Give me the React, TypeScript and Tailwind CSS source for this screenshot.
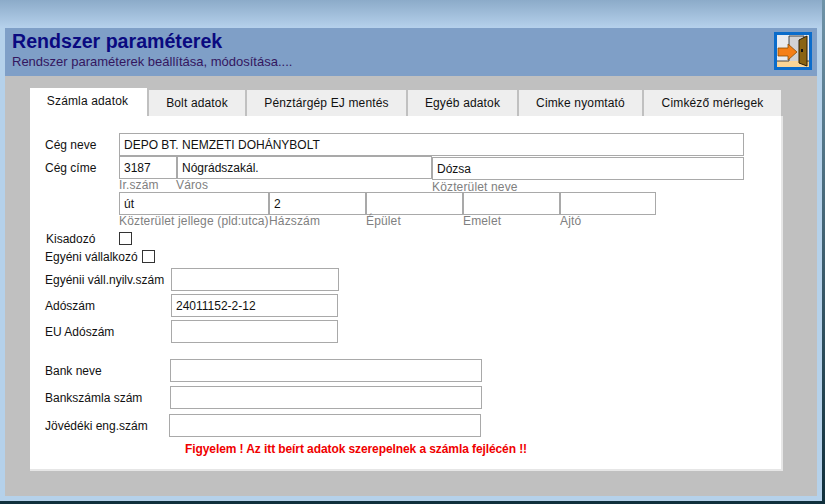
const tabs = [
  { label: 'Számla adatok', w: 'w-[117px]', active: true },
  { label: 'Bolt adatok', w: 'w-[96px]' },
  { label: 'Pénztárgép EJ mentés', w: 'w-[159px]' },
  { label: 'Egyéb adatok', w: 'w-[109px]' },
  { label: 'Cimke nyomtató', w: 'w-[123px]' },
  { label: 'Cimkéző mérlegek', w: 'w-[137px]' },
];

function Box({ value = '', className = '' }: { value?: string; className?: string }) {
  return (
    <input
      readOnly
      value={value}
      className={`block h-[23px] border border-[#a9a9a9] bg-white pl-[4px] text-[12px] text-[#111] outline-none ${className}`}
    />
  );
}

function Hint({ children, className = '' }: { children: string; className?: string }) {
  return <div className={`text-[12px] leading-[13px] tracking-[0.15px] text-[#808080] ${className}`}>{children}</div>;
}

function Check() {
  return <div className="h-[13px] w-[13px] border border-[#333] bg-white" />;
}

function Row({ label, value, w, top, left }: { label: string; value?: string; w: string; top: string; left: string }) {
  return (
    <div className={`flex items-center ${top}`}>
      <span className={`text-[12px] text-[#111] ${left}`}>{label}</span>
      <Box value={value} className={w} />
    </div>
  );
}

function DoorIcon() {
  return (
    <div className="h-[38px] w-[38px] border-[3px] border-[#0b6ccb] bg-[#e6e8ee]">
      <svg width="32" height="32" viewBox="0 0 32 32" className="block">
        <rect x="0" y="0" width="32" height="32" fill="#e9ebf0" />
        <polygon points="0,26 32,26 32,32 0,32" fill="#fbd596" />
        <polyline points="0,26 12,26 12,1 27,1 27,26 32,26" fill="#d2d2d4" stroke="#333" strokeWidth="0.9" />
        <polygon points="22,5 30,1 30,31 22,28" fill="#8a6414" stroke="#2c1e04" strokeWidth="1" />
        <rect x="24" y="14" width="2" height="3" fill="#111" />
        <polygon
          points="1,13 11,13 11,9 20,17 11,25 11,21 1,21"
          fill="#f57f17"
          stroke="#8a4b00"
          strokeWidth="0.8"
        />
      </svg>
    </div>
  );
}

export default function App() {
  return (
    <div className="flex h-[504px] w-[825px] flex-col overflow-hidden bg-[#b5d1ea] font-['Liberation_Sans',Arial,sans-serif]">
      <div className="flex min-h-0 flex-1">
        <div className="flex min-w-0 flex-1 flex-col">
          <div className="h-[28px] shrink-0 bg-gradient-to-b from-[#8cabc9] to-[#b6d1ec]" />
          <div className="ml-[5px] mr-[5px] flex h-[468px] flex-col">
            <header className="flex h-[48px] shrink-0 items-start justify-between bg-[#7f9fc7] pl-[7px] pr-[5px]">
              <div>
                <h1 className="mt-[3px] text-[19.6px] font-bold leading-[21px] text-[#0a0a80]">Rendszer paraméterek</h1>
                <p className="mt-[2px] text-[13px] leading-[15px] text-[#33165f]">Rendszer paraméterek beállítása, módosítása....</p>
              </div>
              <div className="mt-[4px]">
                <DoorIcon />
              </div>
            </header>

            <main className="flex-1 bg-[#c0c0c0] pl-[25px] pt-[12px]">
              <nav className="flex h-[28px] w-[753px] items-end gap-[2px]">
                {tabs.map((t) => (
                  <div
                    key={t.label}
                    className={`flex items-center justify-center text-[12px] tracking-[0.15px] text-[#111] ${t.w} ${
                      t.active ? 'h-[28px] bg-white pb-[3px] pr-[2px]' : 'h-[26px] bg-[#eeeeee]'
                    }`}
                  >
                    {t.label}
                  </div>
                ))}
              </nav>

              <section className="h-[355px] w-[753px] border-b-2 border-r-2 border-[#e6e6e6] bg-white pl-[15px] pt-[17px]">
                <div className="flex items-center">
                  <span className="w-[74px] text-[12px] text-[#111]">Cég neve</span>
                  <Box value="DEPO BT. NEMZETI DOHÁNYBOLT" className="w-[625px]" />
                </div>

                <div className="flex">
                  <span className="mt-[3px] w-[74px] text-[12px] text-[#111]">Cég címe</span>
                  <div className="w-[625px]">
                    <div className="flex">
                      <div>
                        <div className="flex">
                          <Box value="3187" className="w-[58px]" />
                          <Box value="Nógrádszakál." className="w-[255px]" />
                        </div>
                        <div className="flex">
                          <Hint className="w-[57px]">Ir.szám</Hint>
                          <Hint>Város</Hint>
                        </div>
                      </div>
                      <div className="mt-[1px] h-[35px]">
                        <Box value="Dózsa" className="w-[312px]" />
                        <Hint className="mt-[1px]">Közterület neve</Hint>
                      </div>
                    </div>
                    <div className="flex">
                      {[
                        { value: 'út', hint: 'Közterület jellege (pld:utca)', w: 'w-[150px]' },
                        { value: '2', hint: 'Házszám', w: 'w-[97px]' },
                        { value: '', hint: 'Épület', w: 'w-[97px]' },
                        { value: '', hint: 'Emelet', w: 'w-[97px]' },
                        { value: '', hint: 'Ajtó', w: 'w-[96px]' },
                      ].map((f) => (
                        <div key={f.hint} className={f.w}>
                          <Box value={f.value} className="w-full" />
                          <Hint className="whitespace-nowrap">{f.hint}</Hint>
                        </div>
                      ))}
                    </div>
                  </div>
                </div>

                <div className="mt-[4px] flex h-[13px] items-center">
                  <span className="ml-px w-[73px] text-[12px] text-[#111]">Kisadozó</span>
                  <Check />
                </div>
                <div className="mt-[5px] flex h-[13px] items-center">
                  <span className="w-[97px] text-[12px] text-[#111]">Egyéni vállalkozó</span>
                  <Check />
                </div>

                <Row label="Egyénii váll.nyilv.szám" w="w-[168px]" top="mt-[5px]" left="w-[126px]" />
                <Row label="Adószám" value="24011152-2-12" w="w-[167px]" top="mt-[3px]" left="w-[126px]" />
                <Row label="EU Adószám" w="w-[167px]" top="mt-[3px]" left="w-[126px]" />
                <Row label="Bank neve" w="w-[312px]" top="mt-[16px]" left="w-[125px]" />
                <Row label="Bankszámla szám" w="w-[312px]" top="mt-[4px]" left="w-[125px]" />
                <Row label="Jövédéki eng.szám" w="w-[312px]" top="mt-[5px]" left="w-[124px]" />

                <p className="ml-[140px] mt-[5px] text-[12px] font-bold leading-[14px] tracking-[-0.09px] text-[#f00000]">
                  Figyelem ! Az itt beírt adatok szerepelnek a számla fejlécén !!
                </p>
              </section>
            </main>
          </div>
        </div>
        <div className="w-[3px] shrink-0 bg-gradient-to-b from-[#6f93a8] to-[#10303c]" />
      </div>
      <div className="h-[3px] shrink-0 bg-[#10303c]" />
    </div>
  );
}
